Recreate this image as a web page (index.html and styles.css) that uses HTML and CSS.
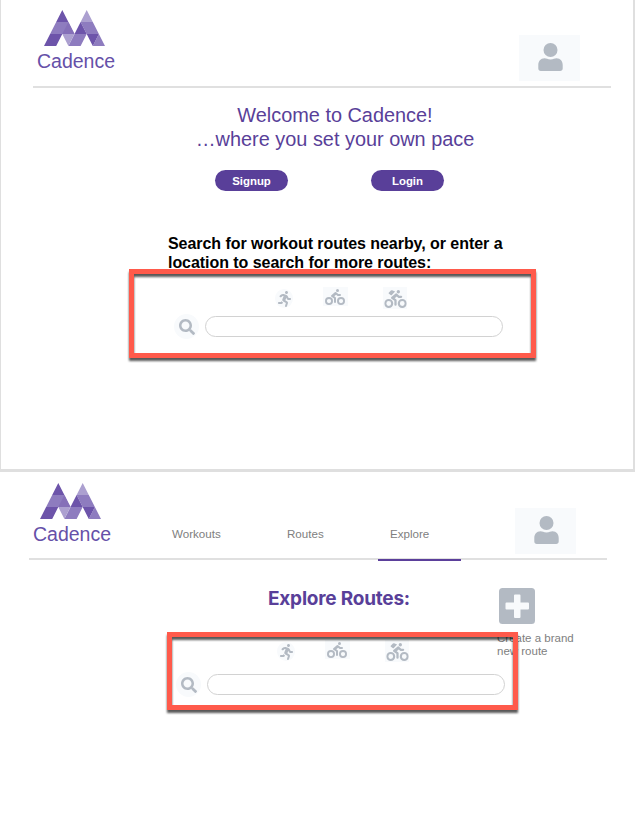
FILE: index.html
```html
<!DOCTYPE html>
<html lang="en">
<head>
<meta charset="utf-8">
<title>Cadence</title>
<link rel="stylesheet" href="styles.css">
</head>
<body>
<svg class="defs" width="0" height="0">
  <symbol id="logo" viewBox="0 0 61 36">
    <g fill="#8e7cbf"><path d="M12.2 12h12.2l6.1 12H6.1zM30.5 24h12.2l-6.1 12H24.4zM36.6 12h12.2l6.1 12H42.7zM54.9 24 61 36H48.8z"/></g>
    <g fill="#6d54aa"><path d="M18.3 0l6.1 12H12.2zM6.1 24h12.2l-6.1 12H0zM36.6 12l6.1 12H30.5zM42.7 24h12.2l-6.1 12z"/></g>
    <g fill="#aca0d0"><path d="M42.7 0l6.1 12H36.6zM18.3 24h12.2l-6.1 12z"/></g>
    <path fill="#8570b8" d="M24.4 12l6.1 12H18.3z"/>
  </symbol>
  <symbol id="user" viewBox="0 0 25 28">
    <circle cx="12.5" cy="7" r="7"/><path d="M6.5 15.3c2 0 3 1.2 6 1.2s4-1.2 6-1.2c4 0 6.2 3.2 6.2 6.7v3.5c0 1.5-1 2.5-2.5 2.5H2.800C1.300 28 .3 27 .3 25.500V22c0-3.500 2.200-6.700 6.200-6.700z"/>
  </symbol>
  <symbol id="run" viewBox="0 0 416 512"><path d="M272 96c26.51 0 48-21.49 48-48S298.51 0 272 0s-48 21.49-48 48 21.49 48 48 48zM113.69 317.47l-14.8 34.52H32c-17.67 0-32 14.33-32 32s14.33 32 32 32h77.45c19.25 0 36.58-11.44 44.11-29.09l8.79-20.52-10.67-6.3c-17.32-10.23-30.06-25.37-37.99-42.82zM384 223.99h-44.03l-26.06-53.25c-12.5-25.55-35.45-44.23-61.78-50.94l-71.08-21.14c-28.3-6.8-57.77-.55-80.84 17.14l-39.67 30.41c-14.03 10.75-16.69 30.83-5.94 44.86s30.84 16.69 44.86 5.94l39.69-30.41c7.67-5.89 17.44-8 25.27-6.14l14.7 4.37-37.46 87.39c-12.62 29.48-1.31 64.01 26.3 80.31l84.98 50.17-27.47 87.73c-5.28 16.86 4.11 34.82 20.97 40.09 3.19 1 6.41 1.48 9.58 1.48 13.61 0 26.23-8.77 30.52-22.45l31.64-101.06c5.91-20.77-2.89-43.08-21.64-54.39l-61.24-36.14 31.31-78.28 20.27 41.43c8 16.34 24.92 26.89 43.11 26.89H384c17.67 0 32-14.33 32-32s-14.33-31.99-32-31.99z"/></symbol>
  <symbol id="bike" viewBox="0 0 640 512"><path d="M400 96a48 48 0 1 0-48-48 48 48 0 0 0 48 48zm-4 121a31.9 31.9 0 0 0 20 7h64a32 32 0 0 0 0-64h-52.78L356 103a31.94 31.94 0 0 0-40.81.68l-112 96a32 32 0 0 0 3.08 50.92L288 305.12V416a32 32 0 0 0 64 0V288a32 32 0 0 0-14.25-26.62l-41.36-27.57 58.25-49.92z"/><g fill="none" stroke="#b3bac3" stroke-width="60"><circle cx="128" cy="384" r="98"/><circle cx="512" cy="384" r="98"/></g></symbol>
  <symbol id="search" viewBox="0 0 512 512"><path d="M505 442.7L405.3 343c-4.5-4.5-10.6-7-17-7H372c27.6-35.3 44-79.7 44-128C416 93.1 322.9 0 208 0S0 93.1 0 208s93.1 208 208 208c48.3 0 92.7-16.4 128-44v16.3c0 6.4 2.5 12.5 7 17l99.7 99.7c9.4 9.4 24.6 9.4 33.9 0l28.3-28.3c9.4-9.4 9.4-24.6.1-34zM208 336c-70.7 0-128-57.2-128-128 0-70.7 57.2-128 128-128 70.7 0 128 57.2 128 128 0 70.7-57.2 128-128 128z"/></symbol>
</svg>

<section class="screen landing">
  <header class="header">
    <div class="brand"><svg class="mark"><use href="#logo"/></svg><span>Cadence</span></div>
    <div class="avatar"><svg><use href="#user"/></svg></div>
  </header>
  <h1 class="welcome">Welcome to Cadence!<br><span>…where you set your own pace</span></h1>
  <div class="actions"><button>Signup</button><button>Login</button></div>
  <h2 class="prompt">Search for workout routes nearby, or enter a<br><span>location to search for more routes:</span></h2>
  <div class="finder">
    <div class="modes">
      <span class="mode round"><svg class="run"><use href="#run"/></svg></span>
      <span class="mode"><svg class="bike"><use href="#bike"/></svg></span>
      <span class="mode tall"><svg class="pack" viewBox="0 0 640 512"><use href="#bike" width="640" height="512"/><path d="M190 16q14-14 34-6l84 36-92 98q-10 10-24 2l-58-36q-20-12-6-30z"/></svg></span>
    </div>
    <div class="field"><span class="lens"><svg><use href="#search"/></svg></span><input type="text" aria-label="Location"></div>
  </div>
  <div class="callout"></div>
</section>

<section class="screen explore">
  <header class="header">
    <div class="brand"><svg class="mark"><use href="#logo"/></svg><span>Cadence</span></div>
    <nav class="nav"><a class="workouts">Workouts</a><a class="routes">Routes</a><a class="active">Explore</a></nav>
    <div class="avatar"><svg><use href="#user"/></svg></div>
  </header>
  <div class="content">
    <main>
      <h2 class="title">Explore Routes:</h2>
      <div class="finder">
        <div class="modes">
          <span class="mode round"><svg class="run"><use href="#run"/></svg></span>
          <span class="mode"><svg class="bike"><use href="#bike"/></svg></span>
          <span class="mode tall"><svg class="pack" viewBox="0 0 640 512"><use href="#bike" width="640" height="512"/><path d="M190 16q14-14 34-6l84 36-92 98q-10 10-24 2l-58-36q-20-12-6-30z"/></svg></span>
        </div>
        <div class="field"><span class="lens"><svg><use href="#search"/></svg></span><input type="text" aria-label="Location"></div>
      </div>
    </main>
    <aside class="create">
      <svg viewBox="0 0 36 36"><rect width="36" height="36" rx="3.500" fill="#b3bac3"/><path fill="#f8fafc" d="M16 6.500h4.500q1 0 1 1V14.500h7.500q1 0 1 1v5q0 1-1 1h-7.500V29q0 1-1 1H16q-1 0-1-1v-7.500H7.500q-1 0-1-1v-5q0-1 1-1H15V7.500q0-1 1-1z"/></svg>
      <p>Create a brand<br>new route</p>
    </aside>
  </div>
  <div class="callout"></div>
</section>
</body>
</html>
```
FILE: styles.css
```css
* { box-sizing: border-box; }
body {
  margin: 0;
  width: 635px;
  height: 816px;
  overflow: hidden;
  background: #fff;
  font-family: "Liberation Sans", Arial, sans-serif;
}
.defs { display: block; height: 0; }
h1, h2, p { margin: 0; }

.screen { position: relative; }
.landing {
  height: 472px;
  border: solid #dfdfdf;
  border-width: 0 2px 3px 1px;
}
.explore { height: 344px; }

.header {
  display: flex;
  width: 578px;
  height: 88px;
  margin-left: 32px;
  border-bottom: 2px solid #e0e0e0;
}
.explore .header { margin-left: 29px; }
.brand {
  display: flex;
  flex-direction: column;
  width: 86px;
  padding: 10px 0 0 4px;
  color: #6650a8;
  font-size: 19.5px;
  line-height: 22px;
}
.explore .brand { padding-top: 11px; }
.mark { width: 61px; height: 36px; margin: 0 0 4px 7px; }
.avatar {
  display: flex;
  justify-content: center;
  width: 61px;
  height: 46px;
  margin: 35px 31px 0 auto;
  padding: 8px 0 0 1px;
  background: #f8fafc;
}
.explore .avatar { margin-top: 36px; }
.avatar svg { width: 25px; height: 28px; }
svg { fill: #b3bac3; flex: none; }

.nav {
  display: flex;
  padding: 54px 0 0 57px;
  color: #808080;
  font-size: 11.6px;
  line-height: 16px;
}
.nav .workouts { width: 115px; }
.nav .routes { width: 91px; }
.nav .active {
  width: 83px;
  height: 35px;
  padding-left: 12px;
  border-bottom: 2px solid #5b3f9b;
}

.welcome {
  width: 540px;
  margin: 15px 0 0 64px;
  color: #593f99;
  font-size: 19.9px;
  font-weight: 400;
  line-height: 24px;
  text-align: center;
}
.actions { display: flex; gap: 83px; margin: 19px 0 0 214px; }
.actions button {
  width: 73px;
  height: 21px;
  padding: 0;
  border: 0;
  border-radius: 11px;
  background: #593f99;
  color: #fff;
  font: bold 11.4px/22px "Liberation Sans", Arial, sans-serif;
}
.prompt {
  margin: 43px 0 0 167px;
  color: #000;
  font-size: 16px;
  line-height: 19px;
  letter-spacing: -0.05px;
  white-space: nowrap;
}

.finder { width: 329px; margin: 15px 0 0 173px; }
.modes { display: flex; height: 22px; padding-left: 101px; }
.mode {
  display: flex;
  align-items: center;
  justify-content: center;
  width: 25px;
  height: 19px;
  margin-right: 35px;
  background: #f8fafc;
}
.mode.round { width: 18px; margin: 2px 30px 0 0; border-radius: 50%; }
.mode.tall { width: 24px; height: 22px; margin: 0; }
.mode svg { margin-left: -1px; }
.mode .run { width: 13px; height: 16px; margin-left: 0; }
.bike { width: 20px; height: 16px; }
.mode .pack { width: 23px; height: 18px; margin: 1px 0 0; }
.field { display: flex; align-items: center; gap: 6px; margin-top: 5px; }
.lens {
  display: flex;
  align-items: center;
  justify-content: center;
  width: 25px;
  height: 25px;
  border-radius: 50%;
  background: #f8fafc;
}
.lens svg { width: 16px; height: 16px; }
.field input {
  flex: 1;
  height: 21px;
  padding: 0 10px;
  border: 1px solid #d2d2d2;
  border-radius: 11px;
  background: #fff;
}

.content { display: flex; }
main { width: 497px; }
.title {
  margin: 26px 0 0 268px;
  color: #593f99;
  font: 700 19px/25px Inter, sans-serif;
  letter-spacing: -0.22px;
  white-space: nowrap;
}
.explore .finder { margin: 29px 0 0 176px; }
.explore .field { margin-top: 10px; }
.create { padding-top: 28px; color: #808080; font-size: 11.5px; line-height: 13px; white-space: nowrap; }
.create svg { display: block; width: 36px; height: 36px; margin: 0 0 8px 2px; }

.callout {
  position: absolute;
  top: 269px;
  left: 128px;
  width: 407px;
  height: 89px;
  border: 5px solid #ff5a4b;
  filter: drop-shadow(0 3px 1px rgba(0, 0, 0, .65));
}
.explore .callout { top: 160px; left: 167px; width: 351px; height: 78px; }
```
